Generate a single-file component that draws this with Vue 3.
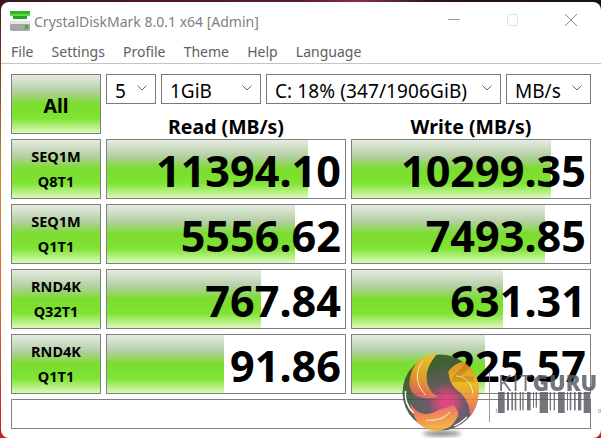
<script setup>
const rows = [
  { a: 'SEQ1M', b: 'Q8T1', read: '11394.10', readFill: 201, write: '10299.35', writeFill: 199 },
  { a: 'SEQ1M', b: 'Q1T1', read: '5556.62', readFill: 188, write: '7493.85', writeFill: 193 },
  { a: 'RND4K', b: 'Q32T1', read: '767.84', readFill: 154, write: '631.31', writeFill: 151 },
  { a: 'RND4K', b: 'Q1T1', read: '91.86', readFill: 117, write: '225.57', writeFill: 133 },
]
const menu = ['File', 'Settings', 'Profile', 'Theme', 'Help', 'Language']
const combos = [
  { text: '5', cls: 'c-count' },
  { text: '1GiB', cls: 'c-size' },
  { text: 'C: 18% (347/1906GiB)', cls: 'c-drive' },
  { text: 'MB/s', cls: 'c-unit' },
]
// x, width, bottom of each barcode stripe
const stripes = [
  [55, 20, 158], [82, 6, 150], [95, 5, 150], [105, 5, 150], [120, 4, 150], [128, 4, 150],
  [142, 11, 150], [160, 3, 142], [168, 4, 142], [180, 25, 158], [210, 4, 150], [222, 4, 150],
  [235, 20, 158], [262, 3, 150], [270, 5, 150], [283, 5, 150], [295, 10, 150], [312, 20, 158],
]
</script>

<template>
  <div class="desktop">
    <div class="window">
      <header class="titlebar">
        <svg class="app-icon" width="20" height="21" viewBox="0 0 20 21">
          <rect x="0" y="0" width="20" height="3" fill="#2fb52f" />
          <rect x="0" y="3" width="20" height="2" fill="#5fdc3c" />
          <rect x="3" y="5" width="14" height="3" fill="#1fa51f" />
          <rect x="0" y="10" width="20" height="10" rx="2" fill="#a3a7a7" />
          <rect x="0" y="10" width="20" height="3" rx="1" fill="#e4e6e6" />
          <rect x="15" y="14" width="3" height="4" fill="#3fae3f" />
        </svg>
        <span class="title">CrystalDiskMark 8.0.1 x64 [Admin]</span>
        <div class="controls">
          <svg width="14" height="14" viewBox="0 0 14 14"><path d="M0 5.500h12" stroke="#9a9a9a" fill="none" /></svg>
          <svg width="14" height="14" viewBox="0 0 14 14"><rect x="1.500" y=".5" width="10" height="11" rx="1.500" stroke="#e4e4e4" fill="none" /></svg>
          <svg width="14" height="14" viewBox="0 0 14 14"><path d="M1 0l12 12M13 0L1 12" stroke="#8a8a8a" fill="none" /></svg>
        </div>
      </header>
      <nav class="menu">
        <span v-for="m in menu" :key="m">{{ m }}</span>
      </nav>
      <main class="panel">
        <div class="all btn">All</div>
        <div class="combos">
          <div v-for="c in combos" :key="c.text" class="combo" :class="c.cls">
            <span>{{ c.text }}</span>
            <svg width="10" height="6" viewBox="0 0 10 6"><path d="M.5.5L5 5 9.500.5" stroke="#666" fill="none" /></svg>
          </div>
        </div>
        <div class="head">Read (MB/s)</div>
        <div class="head">Write (MB/s)</div>
        <template v-for="r in rows" :key="r.a + r.b">
          <div class="label btn"><span>{{ r.a }}</span><span>{{ r.b }}</span></div>
          <div class="value" :style="{ backgroundSize: r.readFill + 'px 100%' }">{{ r.read }}</div>
          <div class="value" :style="{ backgroundSize: r.writeFill + 'px 100%' }">{{ r.write }}</div>
        </template>
        <div class="comment"></div>
      </main>
    </div>

    <!-- kitguru watermark sits over the app -->
    <div class="mark">
      <div class="mark-shadow"></div>
      <svg class="mark-logo" width="77" height="77" viewBox="0 0 77 77">
        <defs>
          <linearGradient id="bladeA" x1="0.7" y1="0" x2="0.4" y2="1">
            <stop offset="0" stop-color="#f6c020" />
            <stop offset="0.55" stop-color="#ee9428" />
            <stop offset="1" stop-color="#dc4a4e" />
          </linearGradient>
          <linearGradient id="bladeB" x1="0.5" y1="0" x2="0.5" y2="1">
            <stop offset="0" stop-color="#e88a24" />
            <stop offset="0.4" stop-color="#f2b41e" />
            <stop offset="0.75" stop-color="#ee7a38" />
            <stop offset="1" stop-color="#e0486a" />
          </linearGradient>
          <linearGradient id="bladeC" x1="0.5" y1="1" x2="0.3" y2="0">
            <stop offset="0" stop-color="#f4b42a" />
            <stop offset="0.5" stop-color="#ee7e40" />
            <stop offset="1" stop-color="#e65060" />
          </linearGradient>
          <radialGradient id="core" cx="0.58" cy="0.62" r="0.5">
            <stop offset="0" stop-color="#ea2c78" />
            <stop offset="0.22" stop-color="#c43468" />
            <stop offset="0.5" stop-color="#5a4658" />
            <stop offset="0.8" stop-color="#4a4c4c" />
            <stop offset="1" stop-color="#38502f" />
          </radialGradient>
        </defs>
        <circle cx="38.500" cy="38.500" r="38" fill="url(#core)" />
        <path d="M34.700.3C22 .6 12 6 8 24c-1.500 6 0 10 1.700 13.700C14 44 26 46 36 42.700 28 39 24 30 24.700 21 25.500 13 30 6 34.700.3Z" fill="url(#bladeA)" />
        <path d="M46.300 17.700C50 12 55 9 61.300 7.700 71 14 77 24 77 34c0 12-3 21-9 28.700C68 55 67 51 64.700 47.700 62 41 57 38 53 34.300 49 30 47 24 46.300 17.700Z" fill="url(#bladeB)" />
        <path d="M8 49c3 5 7 9 11.700 10.300C26 61 32 59 36.300 56c5-1.500 10-3 15-5 3 3 5 6 5 10-2 5-5 9-8.300 11.700C43 75 38 77 33 77 26 76 20 73 16.300 69.300 12 63 9 56 8 49Z" fill="url(#bladeC)" />
        <path d="M21 7C14 15 12 30 24 41" stroke="#fff3cf" stroke-width="1" fill="none" />
        <path d="M54 22c9 0 16 7 17 18" stroke="#fff3cf" stroke-width="1" fill="none" />
        <path d="M24 66c9 1 18-1 24-8" stroke="#fff3cf" stroke-width="1" fill="none" />
        <path d="M3.500 37c-1 8 2 16 8 22" stroke="#fff" stroke-width="1.500" fill="none" />
        <path d="M52 72c5-2 9-5 13-9" stroke="#fff" stroke-width="1.200" fill="none" />
      </svg>
      <div class="brand">
        <div class="brand-word"><span class="kit">KIT</span><span class="guru">GURU</span></div>
        <svg class="barcode" width="110" height="24" viewBox="0 0 330 72">
          <rect v-for="s in stripes" :key="s[0]" :x="s[0] - 55" y="0" :width="s[1]" :height="s[2] - 95" fill="#5b6066" />
        </svg>
        <span class="tick tick-l">1</span>
        <span class="tick tick-r">0</span>
      </div>
    </div>
  </div>
</template>

<style scoped>
.desktop {
  position: relative;
  width: 601px;
  height: 438px;
  overflow: hidden;
  box-sizing: border-box;
  padding: 2px 0 0 1px;
  background:
    linear-gradient(90deg, #3c1420 0, #5a1c30 50%, #8a2c50 60%, #2a1418 72%, #1c1014 100%) top / 100% 8px no-repeat,
    linear-gradient(180deg, #3c1420 0, #c8902c 40%, #d86a2c 70%, #c41c20 100%);
  font-family: "Noto Sans", "Open Sans", sans-serif;
  color: #000;
}
.window {
  height: 436px;
  background: #fff;
  border-radius: 8px;
  display: flex;
  flex-direction: column;
}
.titlebar {
  height: 38px;
  display: flex;
  align-items: center;
  padding-left: 9px;
  flex: none;
}
.app-icon {
  margin-right: 4px;
}
.title {
  font-size: 14px;
  color: #808080;
  white-space: nowrap;
}
.controls {
  margin-left: auto;
  display: flex;
  gap: 44px;
  margin-right: 23px;
}
.controls svg {
  display: block;
}
.menu {
  height: 23px;
  display: flex;
  align-items: center;
  gap: 18.200px;
  padding-left: 10px;
  font-size: 14px;
  color: #5e5e5e;
  border-bottom: 1px solid #c4c4c4;
  flex: none;
}
.panel {
  display: grid;
  grid-template-columns: 90px 240px 240px;
  grid-template-rows: 30px 25px repeat(4, 60px) 30px;
  gap: 5px;
  padding: 10px 0 0 10px;
}
.btn {
  box-sizing: border-box;
  border: 1px solid #808080;
  background: linear-gradient(180deg, #e6ebe2 0, #b4cfa4 28%, #7bdc2e 50%, #7fe434 75%, #dcf9bc 100%);
  font-weight: 700;
  display: flex;
  flex-direction: column;
  align-items: center;
  justify-content: center;
}
.all {
  grid-row: 1 / 3;
  font-size: 19.500px;
  padding-top: 2px;
}
.combos {
  grid-column: 2 / 4;
  display: flex;
  gap: 5px;
}
.combo {
  box-sizing: border-box;
  border: 1px solid #7a7a7a;
  display: flex;
  align-items: center;
  justify-content: space-between;
  padding: 3px 8px 0 8px;
  font-size: 19px;
  white-space: nowrap;
}
.combo svg {
  margin-top: -5px;
}
.c-count { width: 50px; }
.c-size { width: 100px; }
.c-drive { width: 235px; letter-spacing: 0.1px; }
.c-unit { width: 85px; }
.head {
  font-size: 19.500px;
  font-weight: 700;
  text-align: center;
  line-height: 35px;
}
.label {
  font-size: 14.500px;
  gap: 4px;
  line-height: 21px;
}
.value {
  box-sizing: border-box;
  border: 1px solid #808080;
  background-color: #fff;
  background-image: linear-gradient(180deg, #e6ebe2 0, #b4cfa4 28%, #7bdc2e 50%, #7fe434 75%, #dcf9bc 100%);
  background-repeat: no-repeat;
  font-size: 43.200px;
  font-weight: 700;
  line-height: 61px;
  text-align: right;
  padding-right: 4px;
  white-space: nowrap;
}
.comment {
  grid-column: 1 / 4;
  box-sizing: border-box;
  border: 1px solid #808080;
}
.mark {
  position: absolute;
  left: 401px;
  top: 352px;
  width: 200px;
  height: 86px;
  pointer-events: none;
}
.mark-logo {
  position: absolute;
  left: 1px;
  top: 2px;
  opacity: 0.88;
}
.mark-shadow {
  position: absolute;
  left: 22px;
  top: 79px;
  width: 38px;
  height: 5px;
  border-radius: 50%;
  background: #777;
  filter: blur(2px);
}
.brand {
  position: absolute;
  left: 88px;
  top: 20px;
  height: 50px;
  border-left: 1px solid #8a8d90;
  padding-left: 8px;
  color: #5b6066;
  opacity: 0.85;
}
.brand-word {
  font-size: 22px;
  line-height: 20px;
  white-space: nowrap;
  font-family: "Open Sans", sans-serif;
}
.kit {
  font-weight: 400;
  letter-spacing: 1px;
}
.guru {
  font-weight: 800;
}
.barcode {
  display: block;
}
.tick {
  position: absolute;
  top: 35px;
  font-size: 6px;
  line-height: 8px;
}
.tick-l { left: 5px; }
.tick-r { left: 108px; }
</style>
